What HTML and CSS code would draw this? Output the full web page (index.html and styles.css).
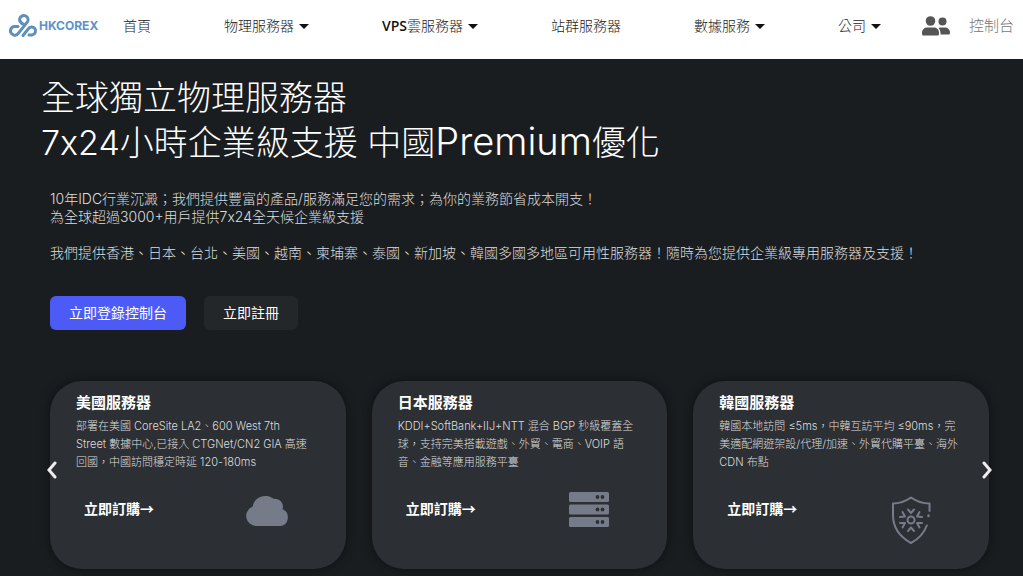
FILE: index.html
```html
<!DOCTYPE html>
<html lang="zh-Hant">
  <head>
    <meta charset="UTF-8" />
    <meta name="viewport" content="width=device-width, initial-scale=1.0" />
    <title>HKCOREX</title>
    <link rel="stylesheet" href="styles.css">
  </head>

  <body>
    <!-- Header -->
    <header class="header">
      <a class="logo" href="#">
        <svg class="logo-mark" viewBox="0 0 30 24" fill="none" stroke="#5f8fbb" stroke-width="3" stroke-linecap="round">
          <path d="M9 12.500H6a4.300 4.300 0 1 0 3.500 6.500L17.500 9a4.200 4.200 0 1 0-6.500-1.500" />
          <path d="M14 21.500L19 15.300a4 4 0 1 1 4 5.700h-3" />
          <path d="M11.500 7.500c.5 1.500 1.500 2.500 3 2.500" />
        </svg>
        <span>HKCOREX</span>
      </a>
      <nav class="nav">
        <a href="#">首頁</a>
        <a href="#">物理服務器<i class="caret"></i></a>
        <a href="#"><b>VPS</b>雲服務器<i class="caret"></i></a>
        <a href="#">站群服務器</a>
        <a href="#">數據服務<i class="caret"></i></a>
        <a href="#">公司<i class="caret"></i></a>
      </nav>
      <a class="console" href="#">
        <svg class="users" viewBox="0 0 28 20" fill="#555">
          <circle cx="8.500" cy="5" r="4.800" />
          <circle cx="20.500" cy="5.500" r="4" />
          <path d="M5 11.500h7a5 5 0 0 1 5 5V18a1.500 1.500 0 0 1-1.500 1.500h-14A1.500 1.500 0 0 1 0 18v-1.500a5 5 0 0 1 5-5z" />
          <path d="M18 11.500h5a5 5 0 0 1 5 5v.5a1.500 1.500 0 0 1-1.500 1.500h-8v-2a7 7 0 0 0-2-4.600z" />
        </svg>
        <span>控制台</span>
      </a>
    </header>

    <!-- Hero -->
    <main class="hero">
      <h1>全球獨立物理服務器<br>7x24小時企業級支援 中國<span>Premium</span>優化</h1>
      <p class="intro">
        10年IDC行業沉澱；我們提供豐富的產品/服務滿足您的需求；為你的業務節省成本開支！<br>
        為全球超過3000+用戶提供7x24全天候企業級支援<br>
        <br>
        我們提供香港、日本、台北、美國、越南、柬埔寨、泰國、新加坡、韓國多國多地區可用性服務器！隨時為您提供企業級專用服務器及支援！
      </p>
      <div class="actions">
        <button class="btn btn-primary" type="button">立即登錄控制台</button>
        <button class="btn" type="button">立即註冊</button>
      </div>
    </main>

    <!-- Server cards -->
    <section class="slider">
      <article class="card">
        <h2>美國服務器</h2>
        <p>部署在美國 CoreSite LA2、600 West 7th<br>Street 數據中心,已接入 CTGNet/CN2 GIA 高速<br>回國，中國訪問穩定時延 120-180ms</p>
        <div class="card-foot">
          <a href="#">立即訂購→</a>
          <svg class="card-icon" viewBox="0 0 44 54" fill="#767b8a">
            <path d="M11 36a10 10 0 0 1-3.500-19.300A13 13 0 0 1 28.500 8.800a8 8 0 0 1 9 10.500A8.700 8.700 0 0 1 35 36z" />
          </svg>
        </div>
      </article>

      <article class="card">
        <h2>日本服務器</h2>
        <p>KDDI+SoftBank+IIJ+NTT 混合 BGP 秒級覆蓋全<br>球，支持完美搭載遊戲、外貿、電商、VOIP 語<br>音、金融等應用服務平臺</p>
        <div class="card-foot">
          <a href="#">立即訂購→</a>
          <svg class="card-icon" viewBox="0 0 44 54">
            <g fill="#767b8a">
              <rect x="3" y="2" width="40" height="10" rx="1.500" />
              <rect x="3" y="14.500" width="40" height="10" rx="1.500" />
              <rect x="3" y="27" width="40" height="10" rx="1.500" />
            </g>
            <g fill="#2c2f33">
              <circle cx="31.500" cy="7" r="1.900" /><circle cx="36.500" cy="7" r="1.900" />
              <circle cx="31.500" cy="19.500" r="1.900" /><circle cx="36.500" cy="19.500" r="1.900" />
              <circle cx="31.500" cy="32" r="1.900" /><circle cx="36.500" cy="32" r="1.900" />
            </g>
          </svg>
        </div>
      </article>

      <article class="card">
        <h2>韓國服務器</h2>
        <p>韓國本地訪問 ≤5ms，中韓互訪平均 ≤90ms，完<br>美適配網遊架設/代理/加速、外貿代購平臺、海外<br>CDN 布點</p>
        <div class="card-foot">
          <a href="#">立即訂購→</a>
          <svg class="card-icon" viewBox="0 0 44 54" fill="none" stroke="#767b8a" stroke-width="2" stroke-linecap="round" stroke-linejoin="round">
            <path d="M41.500 21v-7.500C34 13.500 28 11 23 7.500 18 11 12 13.500 5 13.500V25c0 13 8 22.500 18 28 7.500-4 13-9.500 15.800-17.500" />
            <path d="M40.500 25.500v.5" stroke-width="2.500" />
            <circle cx="23" cy="30" r="3.500" />
            <path d="M20 19.500l3 3.500 3-3.500M20 41l3-3.500 3 3.500" />
            <path d="M14.500 22l2.500 4.500-5 .5M31.500 22L29 26.500l5 .5" />
            <path d="M12 33h5l-2.500 4.500M34 33h-5l2.500 4.500" />
          </svg>
        </div>
      </article>

      <button class="arrow arrow-prev" type="button" aria-label="上一個">
        <svg viewBox="0 0 10 18"><path d="M8 2L2 9l6 7" /></svg>
      </button>
      <button class="arrow arrow-next" type="button" aria-label="下一個">
        <svg viewBox="0 0 10 18"><path d="M2 2l6 7-6 7" /></svg>
      </button>
    </section>
  </body>
</html>
```
FILE: styles.css
```css
body {
  margin: 0;
  font-family: Inter, "Noto Sans CJK TC", sans-serif;
  font-weight: 300;
  background-color: #1a1d20;
  color: white;
}

a {
  color: inherit;
  text-decoration: none;
}

.header {
  display: flex;
  align-items: center;
  height: 59px;
  padding: 0 9px;
  box-sizing: border-box;
  background-color: white;
  color: #222;
}

.logo {
  display: flex;
  align-items: center;
  width: 114px;
  padding-bottom: 8px;
  color: #5b93c9;
  font-size: 12px;
  font-weight: 700;
}

.logo-mark {
  width: 30px;
  height: 24px;
}

.nav {
  display: flex;
  flex: 1;
  justify-content: space-between;
  padding-bottom: 7px;
  font-family: "Open Sans", "Noto Sans CJK TC", sans-serif;
  font-size: 14px;
  line-height: 20px;
}

.nav a {
  display: flex;
  align-items: center;
}

.nav b {
  font-weight: 600;
  color: #111;
}

.caret {
  margin-left: 5px;
  border: 5px solid transparent;
  border-top-color: #111;
  border-bottom: 0;
}

.console {
  display: flex;
  align-items: center;
  gap: 19px;
  margin-left: 41px;
  padding-bottom: 8px;
  font-size: 15px;
  line-height: 20px;
  color: #777;
}

.users {
  width: 28px;
  height: 20px;
}

.hero {
  padding: 16px 41px 51px;
}

h1 {
  margin: 0;
  font-size: 34px;
  line-height: 45px;
  font-weight: 300;
}

h1 span {
  font-size: 38px;
  line-height: 1;
}

.intro {
  margin: 25px 9px 34px;
  font-size: 14px;
  line-height: 18px;
  color: #ddd;
}

.actions {
  display: flex;
  gap: 18px;
  margin-left: 9px;
}

.btn {
  height: 34px;
  padding: 0 19px 2px;
  border: none;
  border-radius: 6px;
  background-color: #24272a;
  color: white;
  font-family: inherit;
  font-size: 14px;
  font-weight: 400;
  cursor: pointer;
}

.btn-primary {
  background-color: #4c5bf5;
}

.slider {
  position: relative;
  display: grid;
  grid-template-columns: repeat(3, 1fr);
  gap: 26px;
  padding: 0 34px 7px 50px;
}

.card {
  padding: 10px 24px 25px 26px;
  border-radius: 32px;
  background-color: #2c2f33;
  box-shadow: 0 0 10px rgba(0, 0, 0, 0.5);
}

.card h2 {
  margin: 0;
  font-size: 15px;
  line-height: 24px;
  font-weight: 700;
}

.card p {
  margin: 2px 0 0;
  font-size: 11px;
  line-height: 18px;
  white-space: nowrap;
  color: #ddd;
}

.card-foot {
  display: flex;
  justify-content: space-between;
  margin-top: 19px;
  padding: 0 33px 0 8px;
}

.card-foot a {
  font-family: "Noto Sans CJK TC", sans-serif;
  font-size: 14px;
  line-height: 36px;
  font-weight: 700;
}

.card-icon {
  width: 44px;
  height: 54px;
}

.arrow {
  position: absolute;
  top: 80px;
  padding: 0;
  border: none;
  background: none;
  cursor: pointer;
}

.arrow svg {
  display: block;
  width: 10px;
  height: 18px;
  fill: none;
  stroke: #eee;
  stroke-width: 3;
  stroke-linecap: round;
}

.arrow-prev {
  left: 47px;
}

.arrow-next {
  right: 31px;
}
```
